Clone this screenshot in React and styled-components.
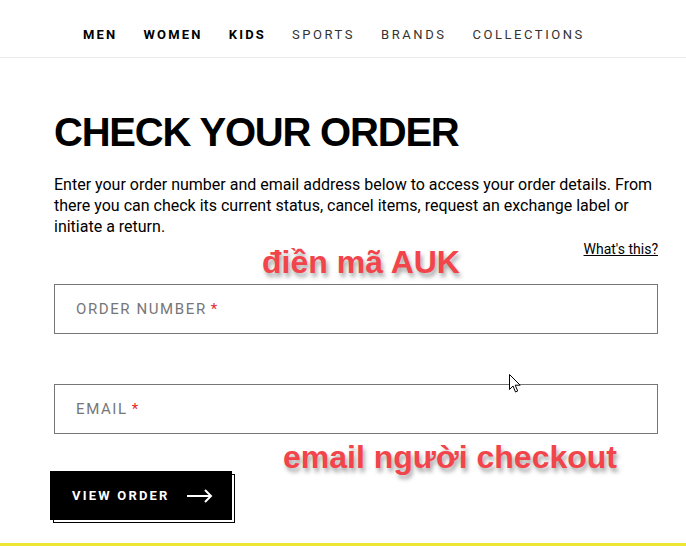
import React from "react";
import styled, { createGlobalStyle } from "styled-components";

const GlobalStyle = createGlobalStyle`
  html, body {
    margin: 0;
    padding: 0;
    background: #fff;
  }
  body {
    font-family: "Roboto", "Liberation Sans", sans-serif;
    color: #000;
    width: 686px;
    height: 546px;
    overflow: hidden;
  }
`;

const Page = styled.div`
  position: relative;
  width: 686px;
  height: 546px;
  display: flex;
  flex-direction: column;
`;

// ------------------------------------
const Nav = styled.nav`
  height: 58px;
  box-sizing: border-box;
  padding: 12px 0 0 83px;
  border-bottom: 1px solid #ebebeb;
  display: flex;
  align-items: center;
  gap: 26px;
`;
const NavItem = styled.a`
  font-family: "Roboto", "Liberation Sans", sans-serif;
  font-size: 13px;
  letter-spacing: ${(props) => (props.bold ? "2.2px" : "2.55px")};
  text-transform: uppercase;
  color: ${(props) => (props.bold ? "#000" : "#333")};
  font-weight: ${(props) => (props.bold ? 700 : 400)};
  text-decoration: none;
`;

// ------------------------------------
const Main = styled.main`
  flex: 1;
  padding: 54px 28px 0 54px;
  display: flex;
  flex-direction: column;
`;
const Title = styled.h1`
  margin: 0;
  font-family: "Liberation Sans", Arial, sans-serif;
  font-weight: 700;
  font-size: 40px;
  line-height: 40px;
  letter-spacing: -1.2px;
  color: #000;
`;
const Desc = styled.p`
  margin: 22px 0 0;
  font-size: 16px;
  line-height: 21px;
  color: #000;
  width: 606px;
`;
const HelpRow = styled.div`
  width: 604px;
  height: 47px;
  display: flex;
  justify-content: flex-end;
  align-items: flex-start;
`;
const HelpLink = styled.a`
  font-size: 14px;
  color: #000;
  text-decoration: underline;
  margin-top: 4px;
`;

const Field = styled.div`
  width: 604px;
  height: 50px;
  box-sizing: border-box;
  border: 1px solid #767677;
  display: flex;
  align-items: center;
  padding-left: 21px;
  margin-bottom: ${(props) => props.gap || 0}px;
`;
const Label = styled.span`
  font-size: 15px;
  letter-spacing: 1.6px;
  color: #767677;
  text-transform: uppercase;
`;
const Required = styled.span`
  color: #e32b2b;
  margin-left: 4px;
`;

const ButtonRow = styled.div`
  margin-top: 37px;
  margin-left: -4px;
`;
const ButtonWrap = styled.div`
  position: relative;
  z-index: 0;
  display: inline-block;
`;
const Button = styled.button`
  position: relative;
  width: 182px;
  height: 49px;
  background: #000;
  color: #fff;
  border: none;
  padding: 0 0 0 22px;
  display: flex;
  align-items: center;
  gap: 17px;
  font-family: "Roboto", "Liberation Sans", sans-serif;
  font-weight: 700;
  font-size: 13px;
  letter-spacing: 2.2px;
  text-transform: uppercase;
  cursor: pointer;

  &::after {
    content: "";
    position: absolute;
    left: 3px;
    top: 3px;
    width: 182px;
    height: 49px;
    border: 1px solid #000;
    box-sizing: border-box;
    z-index: -1;
  }
`;

const Note = styled.div`
  position: absolute;
  left: ${(props) => props.x}px;
  top: ${(props) => props.y}px;
  font-family: "Liberation Sans", Arial, sans-serif;
  font-weight: 700;
  font-size: 32px;
  color: #f2444b;
  white-space: nowrap;
  text-shadow: 2px 4px 4px rgba(0, 0, 0, 0.35);
`;

const Cursor = styled.svg`
  position: absolute;
  left: 509px;
  top: 374px;
`;

const YellowBar = styled.div`
  height: 3px;
  background: #ede734;
`;

const Arrow = () => (
  <svg width="26" height="14" viewBox="0 0 26 14" fill="none">
    <path d="M0 7h24M18 1l6 6-6 6" stroke="#fff" strokeWidth="2" />
  </svg>
);

const App = () => {
  return (
    <Page>
      <GlobalStyle />
      <Nav>
        <NavItem bold>Men</NavItem>
        <NavItem bold>Women</NavItem>
        <NavItem bold>Kids</NavItem>
        <NavItem>Sports</NavItem>
        <NavItem>Brands</NavItem>
        <NavItem>Collections</NavItem>
      </Nav>
      <Main>
        <Title>CHECK YOUR ORDER</Title>
        <Desc>
          Enter your order number and email address below to access your order
          details. From there you can check its current status, cancel items,
          request an exchange label or initiate a return.
        </Desc>
        <HelpRow>
          <HelpLink>What's this?</HelpLink>
        </HelpRow>
        <Field gap={50}>
          <Label>
            Order Number<Required>*</Required>
          </Label>
        </Field>
        <Field>
          <Label>
            Email<Required>*</Required>
          </Label>
        </Field>
        <ButtonRow>
          <ButtonWrap>
            <Button>
              View Order
              <Arrow />
            </Button>
          </ButtonWrap>
        </ButtonRow>
      </Main>
      <YellowBar />
      <Note x={262} y={244}>điền mã AUK</Note>
      <Note x={283} y={439}>email người checkout</Note>
      <Cursor width="12" height="19" viewBox="0 0 12 19">
        <path
          d="M0.5 0.5v15l3.5-3.5 2.5 6 2.2-1-2.5-5.8h5z"
          fill="#fff"
          stroke="#000"
          strokeWidth="1"
        />
      </Cursor>
    </Page>
  );
};

export default App;
